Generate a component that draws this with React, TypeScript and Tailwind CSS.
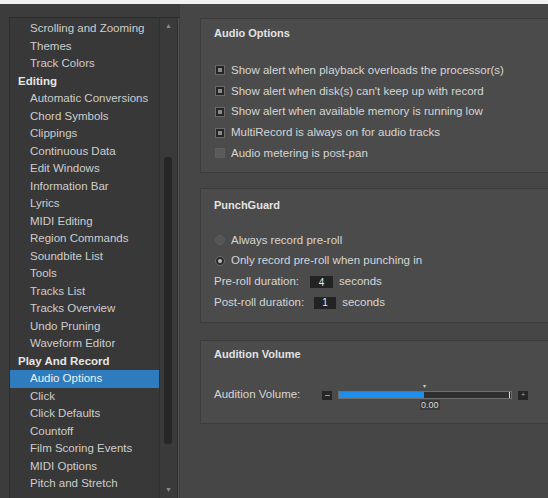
import React from "react";

type Item = { label: string; header?: boolean; selected?: boolean };

const items: Item[] = [
  { label: "Scrolling and Zooming" },
  { label: "Themes" },
  { label: "Track Colors" },
  { label: "Editing", header: true },
  { label: "Automatic Conversions" },
  { label: "Chord Symbols" },
  { label: "Clippings" },
  { label: "Continuous Data" },
  { label: "Edit Windows" },
  { label: "Information Bar" },
  { label: "Lyrics" },
  { label: "MIDI Editing" },
  { label: "Region Commands" },
  { label: "Soundbite List" },
  { label: "Tools" },
  { label: "Tracks List" },
  { label: "Tracks Overview" },
  { label: "Undo Pruning" },
  { label: "Waveform Editor" },
  { label: "Play And Record", header: true },
  { label: "Audio Options", selected: true },
  { label: "Click" },
  { label: "Click Defaults" },
  { label: "Countoff" },
  { label: "Film Scoring Events" },
  { label: "MIDI Options" },
  { label: "Pitch and Stretch" },
];

const font = { fontFamily: '"Liberation Sans", Arial, sans-serif' };

function Checkbox({ checked }: { checked: boolean }) {
  return checked ? (
    <span className="flex h-[10px] w-[10px] items-center justify-center border border-[#6a6a6a] bg-[#252525]">
      <span className="h-[4px] w-[4px] bg-[#8a8a8a]" />
    </span>
  ) : (
    <span className="h-[10px] w-[10px] border border-[#5e5e5e] bg-[#5a5a5a]" />
  );
}

function Radio({ checked }: { checked: boolean }) {
  return (
    <span
      className={
        "flex h-[10px] w-[10px] items-center justify-center rounded-full border " +
        (checked ? "border-[#6a6a6a] bg-[#2a2a2a]" : "border-[#5c5c5c] bg-[#555555]")
      }
    >
      {checked && <span className="h-[4px] w-[4px] rounded-full bg-[#bdbdbd]" />}
    </span>
  );
}

function Panel({ title, children, className }: { title: string; children: React.ReactNode; className: string }) {
  return (
    <div className={"border-y border-l border-[#3c3c3c] bg-[#4b4b4b] pl-[13px] " + className}>
      <div className="h-[14px] text-[11px] font-bold leading-[14px] text-[#e2e2e2]">{title}</div>
      {children}
    </div>
  );
}

const checks: [string, boolean][] = [
  ["Show alert when playback overloads the processor(s)", true],
  ["Show alert when disk(s) can't keep up with record", true],
  ["Show alert when available memory is running low", true],
  ["MultiRecord is always on for audio tracks", true],
  ["Audio metering is post-pan", false],
];

export default function App() {
  return (
    <div className="flex h-[498px] w-[548px] flex-col overflow-hidden bg-[#464646]" style={font}>
      <div className="h-[4px] shrink-0 bg-[#f1f1f1]" />
      <div className="flex min-h-0 flex-1">
        {/* category list */}
        <div className="flex w-[180px] shrink-0 flex-col bg-[#3c3c3c] pl-[9px] pt-[13px]">
          <div className="flex min-h-0 flex-1 border-l border-t border-[#2c2c2c]">
            <div className="flex w-[149px] flex-col bg-[#383838] pt-[2px]">
              {items.map((it) => (
                <div
                  key={it.label}
                  className={
                    "flex h-[17.5px] shrink-0 items-center whitespace-nowrap text-[11.5px] " +
                    (it.header
                      ? "pl-[8px] font-bold text-[#e6e6e6]"
                      : it.selected
                      ? "bg-[#2e7cbd] pl-[20px] text-[#f0f0f0]"
                      : "pl-[20px] text-[#cdcdcd]")
                  }
                >
                  {it.label}
                </div>
              ))}
            </div>
            {/* scrollbar */}
            <div className="relative w-[19px] border-x border-[#2f2f2f] bg-[#3a3a3a]">
              <div className="absolute left-0 right-0 top-[4px] text-center text-[7px] leading-[8px] text-[#8a8a8a]">▲</div>
              <div className="absolute left-[4px] top-[139px] h-[287px] w-[8px] rounded-[3px] bg-[#262626]" />
              <div className="absolute bottom-[4px] left-0 right-0 text-center text-[7px] leading-[8px] text-[#8a8a8a]">▼</div>
            </div>
            <div className="w-[1px] bg-[#555555]" />
          </div>
        </div>

        {/* settings */}
        <div className="flex flex-1 flex-col pl-[20px] pt-[14px]">
          <Panel title="Audio Options" className="h-[155px] pt-[7px]">
            <div className="mt-[20px] flex flex-col">
              {checks.map(([label, on]) => (
                <div key={label} className="flex h-[20.75px] items-center gap-[6px] pl-[1px]">
                  <Checkbox checked={on} />
                  <span className="whitespace-nowrap text-[11.5px] text-[#d6d6d6]">{label}</span>
                </div>
              ))}
            </div>
          </Panel>

          <Panel title="PunchGuard" className="mt-[15px] h-[135px] pt-[9px]">
            <div className="mt-[18px] flex flex-col whitespace-nowrap text-[11.5px] text-[#d6d6d6]">
              <div className="flex h-[20.5px] items-center gap-[6px] pl-[1px]">
                <Radio checked={false} />
                <span>Always record pre-roll</span>
              </div>
              <div className="flex h-[21px] items-center gap-[6px] pl-[1px]">
                <Radio checked />
                <span>Only record pre-roll when punching in</span>
              </div>
              <div className="flex h-[21px] items-center">
                <span>Pre-roll duration:</span>
                <span className="ml-[11px] flex h-[12px] w-[23px] items-center justify-center bg-[#232323] text-[10px] text-[#e8e8e8]">4</span>
                <span className="ml-[6px]">seconds</span>
              </div>
              <div className="flex h-[20px] items-center">
                <span>Post-roll duration:</span>
                <span className="ml-[10px] flex h-[12px] w-[22px] items-center justify-center bg-[#232323] text-[10px] text-[#e8e8e8]">1</span>
                <span className="ml-[6px]">seconds</span>
              </div>
            </div>
          </Panel>

          <Panel title="Audition Volume" className="mt-[17px] h-[84px] pt-[6px]">
            <div className="mt-[24px] flex h-[20px] items-center text-[11.5px] text-[#d6d6d6]">
              <span className="w-[108px] whitespace-nowrap">Audition Volume:</span>
              <span className="flex h-[9px] w-[10px] items-center justify-center bg-[#262626]">
                <span className="h-[1px] w-[5px] bg-[#9a9a9a]" />
              </span>
              <div className="relative ml-[6px] flex h-[8px] w-[174px] border border-[#6e6e6e] bg-[#2f2f2f]">
                <div className="h-full w-[85px] bg-[#1f8fee]" />
                <div className="absolute -top-[9px] left-[84px] text-[6px] leading-[6px] text-[#cfcfcf]">▾</div>
                <div className="absolute left-[81px] top-[8px] bg-[#3a3a3a] px-[1px] text-[9px] leading-[10px] text-[#d8d8d8]">0.00</div>
                <div className="absolute right-[1px] top-0 h-full w-[1px] bg-[#e0e0e0]" />
              </div>
              <span className="ml-[6px] flex h-[9px] w-[10px] items-center justify-center bg-[#262626] text-[8px] leading-[8px] text-[#9a9a9a]">+</span>
            </div>
          </Panel>
        </div>
      </div>
    </div>
  );
}
